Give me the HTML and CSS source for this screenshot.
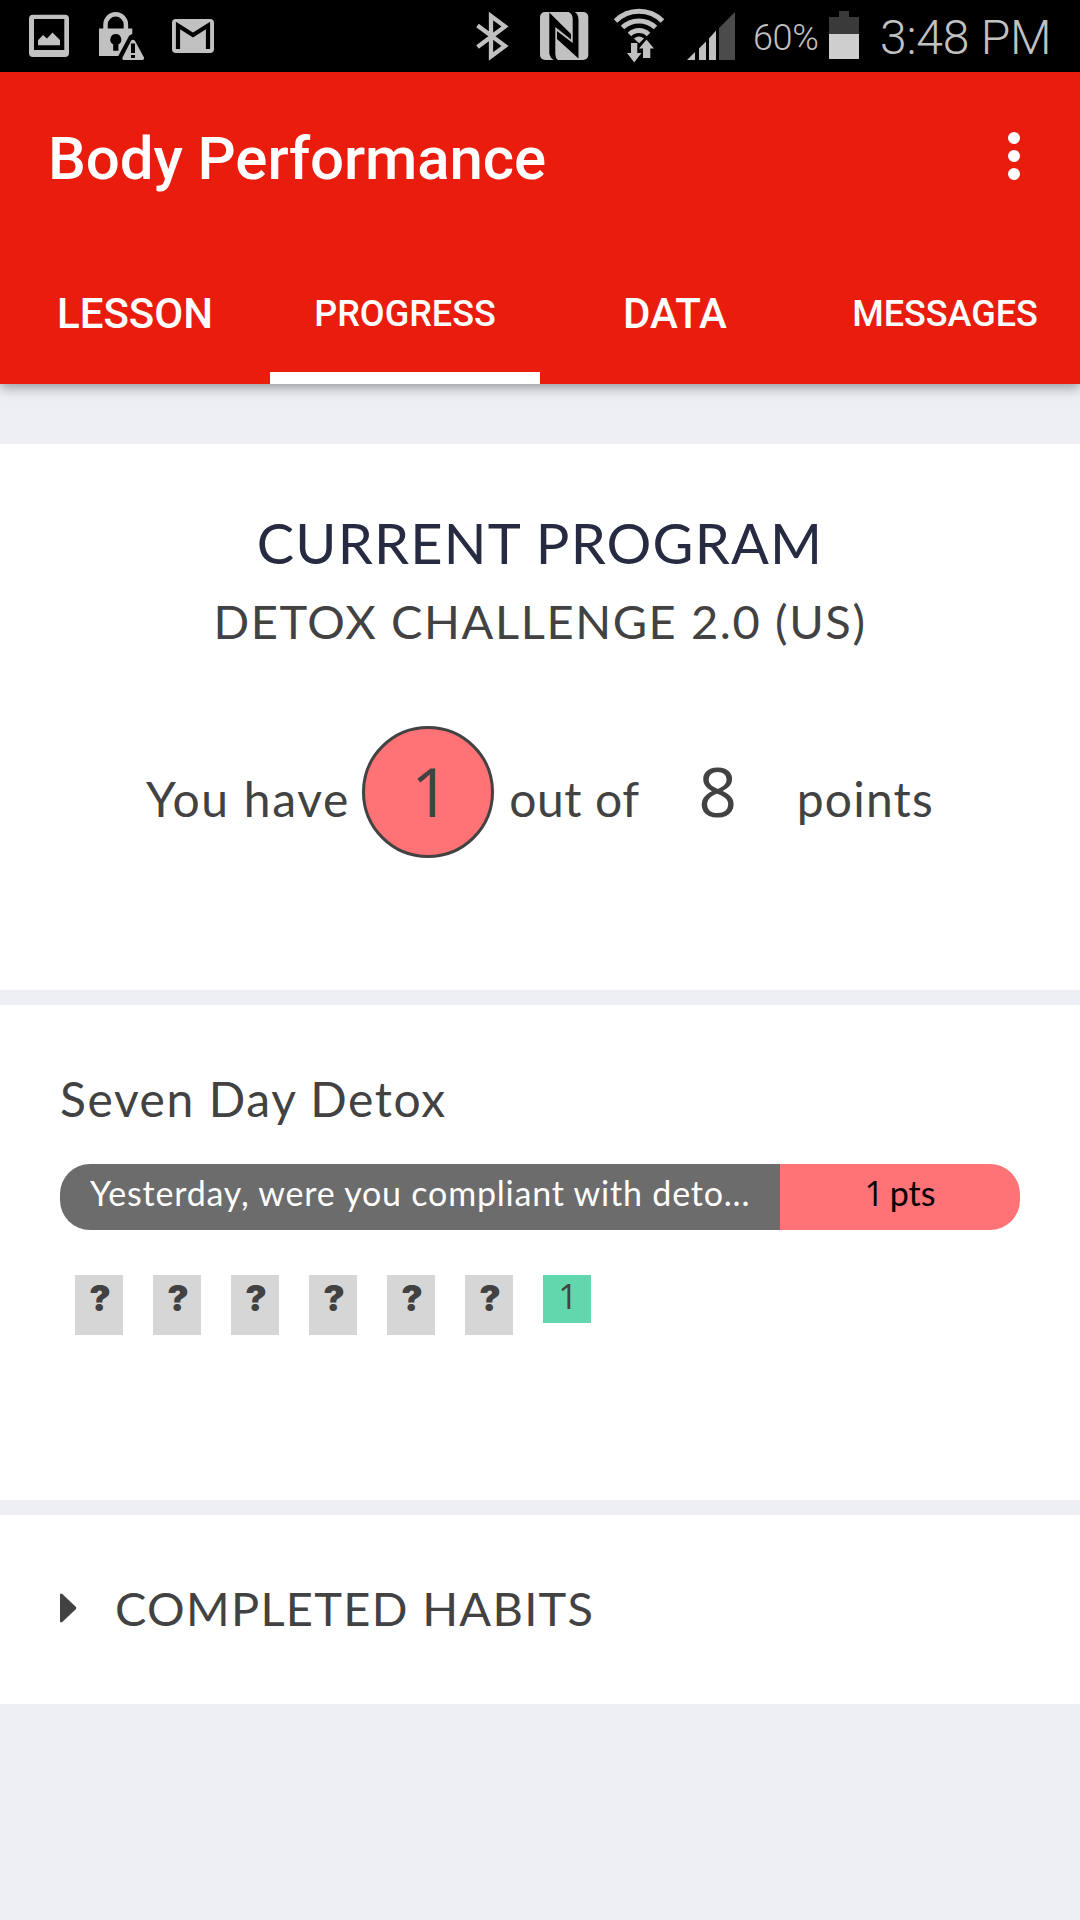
FILE: index.html
```html
<!DOCTYPE html>
<html lang="en">
<head>
    <meta charset="UTF-8">
    <meta name="viewport" content="width=device-width, initial-scale=1.0">
    <title>Body Performance</title>
    <link rel="stylesheet" href="styles.css">
</head>
<body>
    <!-- Status bar -->
    <div class="status-bar">
        <div class="status-left">
            <svg width="40" height="72" viewBox="29 0 40 72">
                <path fill="#c1c1c1" fill-rule="evenodd" d="M33 14.700h32a4 4 0 0 1 4 4V53a4 4 0 0 1-4 4H33a4 4 0 0 1-4-4V18.700a4 4 0 0 1 4-4zM34 19v31h30.300V19z"/>
                <path fill="#c1c1c1" d="M38 45.300v-5l5-5.300 4 3.500 5.500-6 7.500 7.500v5.300z"/>
            </svg>
            <svg class="icon-lock" width="46" height="72" viewBox="99 0 46 72">
                <path fill="none" stroke="#c1c1c1" stroke-width="4.500" d="M105.500 30v-5.500a10.200 10.200 0 0 1 20.400 0V30"/>
                <path fill="#c1c1c1" d="M99 28.500h33.300v5.500l-3 1.500-11 20.500H99z"/>
                <path fill="#000" d="M115.800 34a5.600 5.600 0 0 1 2.600 10.500v6.200h-5.200v-6.200A5.600 5.600 0 0 1 115.800 34z"/>
                <path fill="#c1c1c1" stroke="#000" stroke-width="5" paint-order="stroke" d="M131.200 40.500q1.800-1.500 3.600 0l9.200 17q.3 2.500-2 2.500h-18.500q-1.800-.5-1-2.500z"/>
                <path fill="#000" d="M131 43.500h4v9.500h-4zM131 55h4v3h-4z"/>
            </svg>
            <svg width="42" height="72" viewBox="172 0 42 72">
                <rect x="172" y="19" width="42" height="34" rx="4" fill="#c1c1c1"/>
                <path fill="none" stroke="#000" stroke-width="4.200" d="M178 49V25.500l15 9.500 15-9.500V49"/>
            </svg>
        </div>
        <div class="status-right">
            <svg class="icon-bluetooth" width="34" height="72" viewBox="476 0 34 72">
                <path fill="none" stroke="#c1c1c1" stroke-width="4.300" d="M477.500 25.500l27.500 20.500-14 10.500V16l14 10.500-27.500 20.500"/>
            </svg>
            <svg class="icon-nfc" width="49" height="72" viewBox="540 0 49 72">
                <rect x="540" y="12" width="48.300" height="48" rx="5" fill="#c1c1c1"/>
                <path fill="#000" d="M549.300 12.500L571 34v5.500L555.300 27v27q0 4 2.500 6h-4q-4-2-4.500-7z"/>
                <path fill="#000" d="M557 31l15.700 12V19q0-5-4-7h6q3.800 2 3.800 8v38.500L557 39z"/>
            </svg>
            <svg class="icon-wifi" width="50" height="72" viewBox="614 0 50 72">
                <g fill="none" stroke="#c1c1c1" stroke-width="5">
                    <path d="M615.500 21a33 33 0 0 1 47 0"/>
                    <path d="M622.500 27.500a24 24 0 0 1 33 0"/>
                    <path d="M629.500 34.500a13.500 13.500 0 0 1 19 0"/>
                </g>
                <path fill="#c1c1c1" d="M634 38.500q5-4 10 0l-5 5z"/>
                <path fill="#c1c1c1" stroke="#000" stroke-width="2" paint-order="stroke" d="M631 43h6.300v10h4.200l-7.300 9.500-7.200-9.500h4z"/>
                <path fill="#c1c1c1" stroke="#000" stroke-width="2" paint-order="stroke" d="M646.500 39.500l7.500 9h-3.700V58h-7.300v-9.500H639z"/>
            </svg>
            <svg class="icon-signal" width="49" height="72" viewBox="687 0 49 72">
                <path fill="#c1c1c1" d="M687 60l8-8v8zM699 60V48.500l7-7V60zM709 60V38.500l7-8V60z"/>
                <path fill="#4b4b4b" d="M719 60V28l16-16v48z"/>
            </svg>
            <span class="battery-text">60%</span>
            <svg class="icon-battery" width="30" height="72" viewBox="829 0 30 72">
                <path fill="#3a3a3a" d="M839 11h10v6h10v17h-30V17h10z"/>
                <path fill="#cecece" d="M829 34h30v25h-30z"/>
            </svg>
            <span class="clock">3:48 PM</span>
        </div>
    </div>

    <!-- App bar -->
    <header class="app-bar">
        <div class="toolbar">
            <h1>Body Performance</h1>
            <svg class="menu" width="12" height="48" viewBox="0 0 12 48" fill="#fff">
                <circle cx="6" cy="6" r="6"/>
                <circle cx="6" cy="24" r="6"/>
                <circle cx="6" cy="42" r="6"/>
            </svg>
        </div>
        <nav class="tabs">
            <a class="tab">LESSON</a>
            <a class="tab small active">PROGRESS</a>
            <a class="tab">DATA</a>
            <a class="tab small">MESSAGES</a>
        </nav>
    </header>

    <main>
        <!-- Current program -->
        <section class="card program">
            <h2>CURRENT PROGRAM</h2>
            <h3>DETOX CHALLENGE 2.0 (US)</h3>
            <div class="points">
                <span class="you-have">You have</span>
                <span class="number earned">1</span>
                <span class="out-of">out of</span>
                <span class="number">8</span>
                <span class="points-label">points</span>
            </div>
        </section>

        <!-- Habit -->
        <section class="card habit">
            <h3>Seven Day Detox</h3>
            <div class="habit-bar">
                <div class="question">Yesterday, were you compliant with deto...</div>
                <div class="pts"><span>1</span> pts</div>
            </div>
            <div class="days">
                <span class="day">?</span>
                <span class="day">?</span>
                <span class="day">?</span>
                <span class="day">?</span>
                <span class="day">?</span>
                <span class="day">?</span>
                <span class="day done">1</span>
            </div>
        </section>

        <!-- Completed habits -->
        <section class="card completed">
            <svg width="17" height="30" viewBox="0 0 17 30">
                <path fill="#424242" d="M0 2Q0-.5 2.500 1.200L15.500 13.500Q17 15 15.500 16.500L2.500 28.800Q0 30.500 0 28z"/>
            </svg>
            <h3>COMPLETED HABITS</h3>
        </section>
    </main>
</body>
</html>
```

FILE: styles.css
```css
* { box-sizing: border-box; margin: 0; padding: 0; }
body { background: #eeeff5; color: #424242; font-family: Lato, sans-serif; }
h1, h2, h3 { font-weight: 400; }
svg { display: block; flex: none; }

/* Status bar */
.status-bar {
    display: flex; justify-content: space-between; height: 72px; padding: 0 27px 0 29px;
    background: #000; color: #c1c1c1; font-family: Roboto, sans-serif;
}
.status-left { display: flex; }
.icon-lock { margin: 0 27px 0 30px; }
.status-right { display: flex; white-space: nowrap; }
.icon-bluetooth { margin-right: 30px; }
.icon-nfc { margin-right: 25px; }
.icon-wifi { margin-right: 23px; }
.icon-signal { margin-right: 17px; }
.battery-text { width: 76px; font-size: 36px; line-height: 77px; letter-spacing: -0.4px; font-weight: 350; }
.icon-battery { margin-right: 21px; }
.clock { font-size: 48px; font-weight: 350; line-height: 76px; letter-spacing: -0.2px; width: 173px; }

/* App bar */
.app-bar {
    position: relative; height: 312px; background: #ea1c0d; color: white; font-family: Roboto, sans-serif;
    box-shadow: 0 3px 12px rgba(0, 0, 0, 0.4);
}
.toolbar { display: flex; justify-content: space-between; align-items: center; height: 168px; padding: 0 60px 0 48px; }
.toolbar h1 { padding-top: 6px; font-size: 60px; font-weight: 500; line-height: 70px; letter-spacing: -0.1px; }
.tabs { display: grid; grid-template-columns: repeat(4, 1fr); height: 144px; }
.tab { height: 144px; font-size: 42px; font-weight: 500; line-height: 147px; text-align: center; }
.tab.small { font-size: 36px; line-height: 149px; }
.tab.active { box-shadow: inset 0 -12px white; }

/* Cards */
main { display: flex; flex-direction: column; gap: 15px; padding-top: 60px; }
.card { background: white; }
.card h3 { font-size: 48px; line-height: 72px; }

.program { height: 546px; padding-top: 60px; text-align: center; }
.program h2 { margin-bottom: 4px; color: #262b41; font-size: 56px; line-height: 78px; letter-spacing: 1.2px; }
.program h3 { font-size: 47px; line-height: 71px; letter-spacing: 1.6px; }
.points { display: flex; justify-content: center; height: 132px; margin-top: 69px; font-size: 48px; line-height: 145px; }
.you-have { margin-right: 12px; letter-spacing: 1.7px; }
.out-of { margin: 0 11px 0 15px; letter-spacing: 0.6px; }
.points-label { margin-left: 14px; letter-spacing: 1.2px; }
.number { width: 132px; padding-left: 2px; font-family: "Open Sans", sans-serif; font-size: 68px; line-height: 129px; }
.earned { height: 132px; padding-left: 5px; line-height: 123px; background: #ff7276; border: 3px solid #424242; border-radius: 50%; }

.habit { height: 495px; padding: 58px 60px 0; }
.habit h3 { letter-spacing: 1.6px; }
.habit-bar { display: flex; height: 66px; margin-top: 29px; border-radius: 30px; overflow: hidden; font-size: 34px; line-height: 58px; }
.question { width: 720px; padding-left: 30px; background: #6c6c6c; color: white; white-space: nowrap; letter-spacing: 0.8px; }
.pts { flex: 1; background: #ff7276; color: black; text-align: center; word-spacing: -3px; }
.pts span { font-family: "Open Sans", sans-serif; }
.days { display: flex; align-items: flex-start; gap: 30px; margin-top: 45px; padding-left: 15px; }
.day {
    width: 48px; height: 60px; padding-left: 2px; background: #d6d6d6; font-family: Inter, sans-serif; font-size: 36px;
    font-weight: 900; line-height: 47px; text-align: center;
}
.done { height: 48px; background: #62d6ac; font-family: "Open Sans", sans-serif; font-weight: 400; font-size: 34px; line-height: 42px; }

.completed { display: flex; align-items: center; gap: 38px; height: 189px; padding: 0 0 4px 60px; }
.completed h3 { font-size: 47px; letter-spacing: 1.3px; }
```
